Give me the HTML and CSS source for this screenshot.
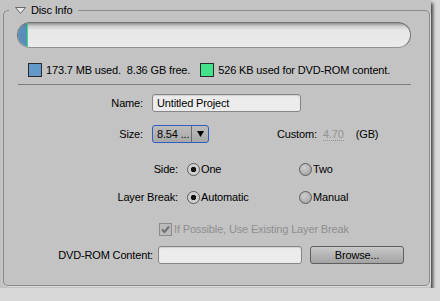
FILE: index.html
```html
<!DOCTYPE html>
<html lang="en">
<head>
  <meta charset="UTF-8" />
  <title>Disc Info</title>
  <link rel="stylesheet" href="styles.css">
</head>
<body>

<div class="window">
  <fieldset class="panel">
    <legend class="panel-title">
      <svg class="twisty" width="11" height="7" viewBox="0 0 11 7"><path d="M0.5 0.5 H10.5 L5.5 6.5 Z" fill="#e6e6e6" stroke="#6a6a6a"/></svg>
      <span>Disc Info</span>
    </legend>

    <div class="usage-bar"><div class="usage-fill" style="width: 9px"></div></div>

    <div class="usage-legend">
      <span class="swatch swatch-disc"></span>
      <span class="legend-text">173.7 MB used.&nbsp; 8.36 GB free.</span>
      <span class="swatch swatch-rom"></span>
      <span class="legend-text">526 KB used for DVD-ROM content.</span>
    </div>

    <div class="divider"></div>

    <div class="row row-name">
      <label class="field-label" for="projectName">Name:</label>
      <input class="text-field name-field" id="projectName" type="text" value="Untitled Project">
    </div>

    <div class="row row-size">
      <span class="field-label">Size:</span>
      <div class="combo">
        <span class="combo-value">8.54 ...</span>
        <span class="combo-arrow">
          <svg width="7" height="6" viewBox="0 0 7 6"><path d="M0 0 H7 L3.5 6 Z" fill="#000"/></svg>
        </span>
      </div>
      <span class="custom-label">Custom:</span>
      <span class="custom-value">4.70</span>
      <span class="custom-unit">(GB)</span>
    </div>

    <div class="row row-option row-side">
      <span class="option-label">Side:</span>
      <div class="option"><span class="radio checked"></span>One</div>
      <div class="option"><span class="radio"></span>Two</div>
    </div>

    <div class="row row-option row-layer">
      <span class="option-label">Layer Break:</span>
      <div class="option"><span class="radio checked"></span>Automatic</div>
      <div class="option"><span class="radio"></span>Manual</div>
    </div>

    <div class="row row-check">
      <span class="checkbox">
        <svg width="11" height="11" viewBox="0 0 11 11"><path d="M2 5.5 L4.5 8 L9 2.5" fill="none" stroke="#6f6f6f" stroke-width="2"/></svg>
      </span>
      <span class="check-text">If Possible, Use Existing Layer Break</span>
    </div>

    <div class="row row-rom">
      <label class="rom-label" for="romContent">DVD-ROM Content:</label>
      <input class="text-field rom-field" id="romContent" type="text">
      <button class="browse">Browse...</button>
    </div>
  </fieldset>
</div>

</body>
</html>
```

FILE: styles.css
```css
body {
  margin: 0;
  background-color: #d8d8d8;
  font-family: "Liberation Sans", Arial, sans-serif;
  font-size: 11px;
  letter-spacing: -0.15px;
  color: #000;
}
.window {
  width: 431px;
  height: 288px;
  background: #c3c3c3;
  box-shadow: 2px 3px 3px rgba(0,0,0,0.7);
  overflow: hidden;
}
.panel {
  box-sizing: border-box;
  width: 427px;
  height: 283px;
  margin: 3px 0 0 3px;
  padding: 5px 18px 0 13px;
  border: 1px solid #8a8a8a;
  border-radius: 5px;
  box-shadow: 1px 1px 0 #dcdcdc;
  min-width: 0;
}
.panel-title {
  display: flex;
  align-items: center;
  gap: 5px;
  margin-left: -8px;
  padding: 0 6px;
  line-height: 14px;
}
.twisty {
  display: block;
}

/* usage bar */
.usage-bar {
  box-sizing: border-box;
  height: 26px;
  border: 1px solid #737373;
  border-bottom-color: #939393;
  border-radius: 13px;
  background: linear-gradient(to bottom, #8e8e8e 0, #cacaca 3px, #e6e6e6 7px, #ebebeb 100%);
  overflow: hidden;
}
.usage-fill {
  height: 100%;
  background: linear-gradient(to bottom, #4a7399 0, #5b8dbb 4px, #5b8dbb 100%);
  border-right: 1px solid #35e07a;
}
.usage-legend {
  display: flex;
  align-items: center;
  height: 14px;
  margin-top: 15px;
  padding-left: 11px;
  white-space: nowrap;
}
.swatch {
  box-sizing: border-box;
  width: 14px;
  height: 14px;
  border: 1px solid #2b2b2b;
  margin-right: 4px;
}
.swatch-disc {
  background: #6399c8;
}
.swatch-rom {
  background: #44e28a;
  margin-left: 10px;
}
.divider {
  margin: 7px 0 0 1px;
  border-top: 1px solid #7c7c7c;
}

/* form rows */
.row {
  display: flex;
  align-items: center;
  white-space: nowrap;
}
.field-label {
  width: 126px;
  margin-right: 9px;
  text-align: right;
}
.text-field {
  box-sizing: border-box;
  height: 18px;
  margin: 0;
  padding: 0 4px;
  border: 1px solid #858585;
  border-radius: 3px;
  background: #ececec;
  box-shadow: inset 0 1px 1px rgba(0,0,0,0.12);
  font-family: inherit;
  font-size: 11px;
  letter-spacing: inherit;
  color: #000;
}
.row-name {
  margin-top: 9px;
}
.name-field {
  width: 149px;
}
.row-size {
  margin-top: 13px;
}
.combo {
  box-sizing: border-box;
  display: flex;
  width: 57px;
  height: 18px;
  border: 1px solid #2f5ec0;
  border-radius: 3px;
  background: linear-gradient(to bottom, #bcbcbc, #a8a8a8);
}
.combo-value {
  flex: 1;
  padding-left: 4px;
  line-height: 16px;
  border-right: 1px solid #6a6a6a;
}
.combo-arrow {
  display: flex;
  align-items: center;
  justify-content: center;
  width: 16px;
}
.custom-label {
  margin-left: 68px;
}
.custom-value {
  margin-left: 6px;
  color: #939393;
  border-bottom: 1px dotted #939393;
  line-height: 12px;
}
.custom-unit {
  margin-left: 12px;
}
.row-option {
  height: 14px;
}
.row-side {
  margin-top: 19px;
}
.row-layer {
  margin-top: 14px;
}
.option-label {
  width: 161px;
  margin-right: 9px;
  text-align: right;
}
.option {
  display: flex;
  align-items: center;
  gap: 1px;
  width: 112px;
}
.radio {
  box-sizing: border-box;
  width: 13px;
  height: 13px;
  border: 1px solid #5c5c5c;
  border-radius: 50%;
  background: radial-gradient(circle at 40% 35%, #cfcfcf, #9c9c9c);
}
.radio.checked {
  background: radial-gradient(circle, #111 0, #111 2.4px, #c9c9c9 3px, #e0e0e0 100%);
}
.row-check {
  height: 14px;
  margin-top: 18px;
  padding-left: 142px;
  color: #8f8f8f;
}
.checkbox {
  box-sizing: border-box;
  display: flex;
  align-items: center;
  justify-content: center;
  width: 13px;
  height: 13px;
  margin-right: 2px;
  border: 1px solid #8c8c8c;
  background: #bababa;
}
.row-rom {
  margin-top: 10px;
}
.rom-label {
  width: 136px;
  margin-right: 5px;
  text-align: right;
}
.rom-field {
  width: 144px;
}
.browse {
  box-sizing: border-box;
  width: 94px;
  height: 18px;
  margin-left: 8px;
  padding: 0;
  border: 1px solid #5e5e5e;
  border-radius: 3px;
  background: linear-gradient(to bottom, #c8c8c8, #a3a3a3);
  font-family: inherit;
  font-size: 11px;
  letter-spacing: inherit;
  color: #000;
}
```
